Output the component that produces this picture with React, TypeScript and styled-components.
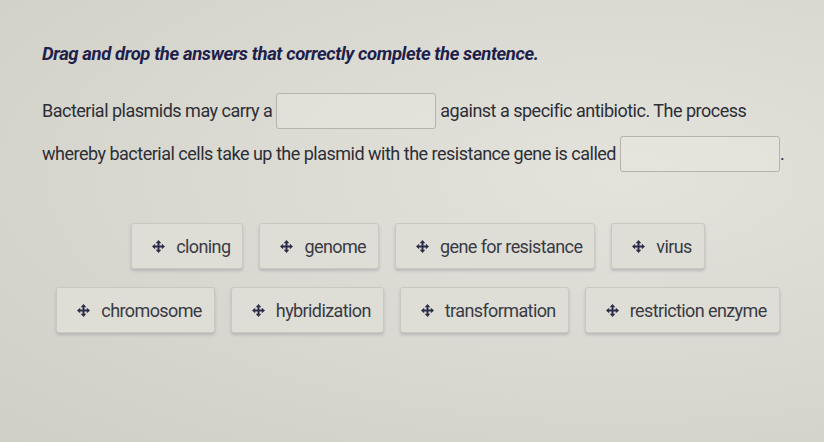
import styled, { createGlobalStyle } from "styled-components";

const GlobalStyle = createGlobalStyle`
  html, body {
    margin: 0;
    padding: 0;
  }
  body {
    width: 824px;
    height: 442px;
    overflow: hidden;
    font-family: Roboto, "Noto Sans", sans-serif;
    background: radial-gradient(ellipse at 75% 40%, #e3e2db 0%, #dbdad2 45%, #cfcfc6 100%);
  }
`;

const answersTop = ["cloning", "genome", "gene for resistance", "virus"];
const answersBottom = ["chromosome", "hybridization", "transformation", "restriction enzyme"];

const MoveIcon = () => (
  <svg width="13" height="13" viewBox="0 0 13 13" aria-hidden="true">
    <g fill="#2b2d4a">
      <rect x="5.5" y="2.5" width="2" height="8" />
      <rect x="2.5" y="5.5" width="8" height="2" />
      <polygon points="6.5,0 9.3,3.2 3.7,3.2" />
      <polygon points="6.5,13 9.3,9.8 3.7,9.8" />
      <polygon points="0,6.5 3.2,3.7 3.2,9.3" />
      <polygon points="13,6.5 9.8,3.7 9.8,9.3" />
    </g>
  </svg>
);

const App = () => {
  return (
    <>
      <GlobalStyle />
      <StyledPage>
        <Title>Drag and drop the answers that correctly complete the sentence.</Title>

        <Sentence>
          <Line>
            Bacterial plasmids may carry a <Blank /> against a specific antibiotic. The process
          </Line>
          <Line>
            whereby bacterial cells take up the plasmid with the resistance gene is called <Blank />.
          </Line>
        </Sentence>

        <Bank>
          <ChipRow>
            {answersTop.map((a) => (
              <Chip key={a}>
                <MoveIcon />
                <span>{a}</span>
              </Chip>
            ))}
          </ChipRow>
          <ChipRow>
            {answersBottom.map((a) => (
              <Chip key={a}>
                <MoveIcon />
                <span>{a}</span>
              </Chip>
            ))}
          </ChipRow>
        </Bank>
      </StyledPage>
    </>
  );
};

export default App;

const StyledPage = styled.div`
  padding: 42px 0 0 42px;
  box-sizing: border-box;
  width: 824px;
`;

const Title = styled.h1`
  margin: 0;
  font-size: 18.5px;
  font-weight: 700;
  font-style: italic;
  letter-spacing: -0.4px;
  color: #1e1f4c;
  line-height: 24px;
`;

const Sentence = styled.div`
  margin-top: 23px;
  color: #2c2e36;
  font-size: 18px;
  letter-spacing: -0.5px;
`;

const Line = styled.div`
  height: 43px;
  display: flex;
  align-items: center;
  white-space: pre;
`;

const Blank = styled.span`
  display: inline-block;
  width: 158px;
  height: 34px;
  border: 1px solid #b4b4ad;
  border-radius: 3px;
  background: rgba(232, 231, 224, 0.5);
`;

const Bank = styled.div`
  margin-top: 48px;
  margin-left: -42px;
  display: flex;
  flex-direction: column;
  align-items: center;
  gap: 18px;
  padding-left: 12px;
`;

const ChipRow = styled.div`
  display: flex;
  gap: 16px;
  justify-content: center;
`;

const Chip = styled.div`
  display: flex;
  align-items: center;
  gap: 11px;
  height: 44px;
  padding: 0 12px 0 20px;
  border: 1px solid #c9c9c2;
  border-radius: 3px;
  background: #dfded6;
  box-shadow: 0 2px 3px rgba(120, 120, 140, 0.35);
  color: #383a44;
  font-size: 18px;
  letter-spacing: -0.6px;
`;
